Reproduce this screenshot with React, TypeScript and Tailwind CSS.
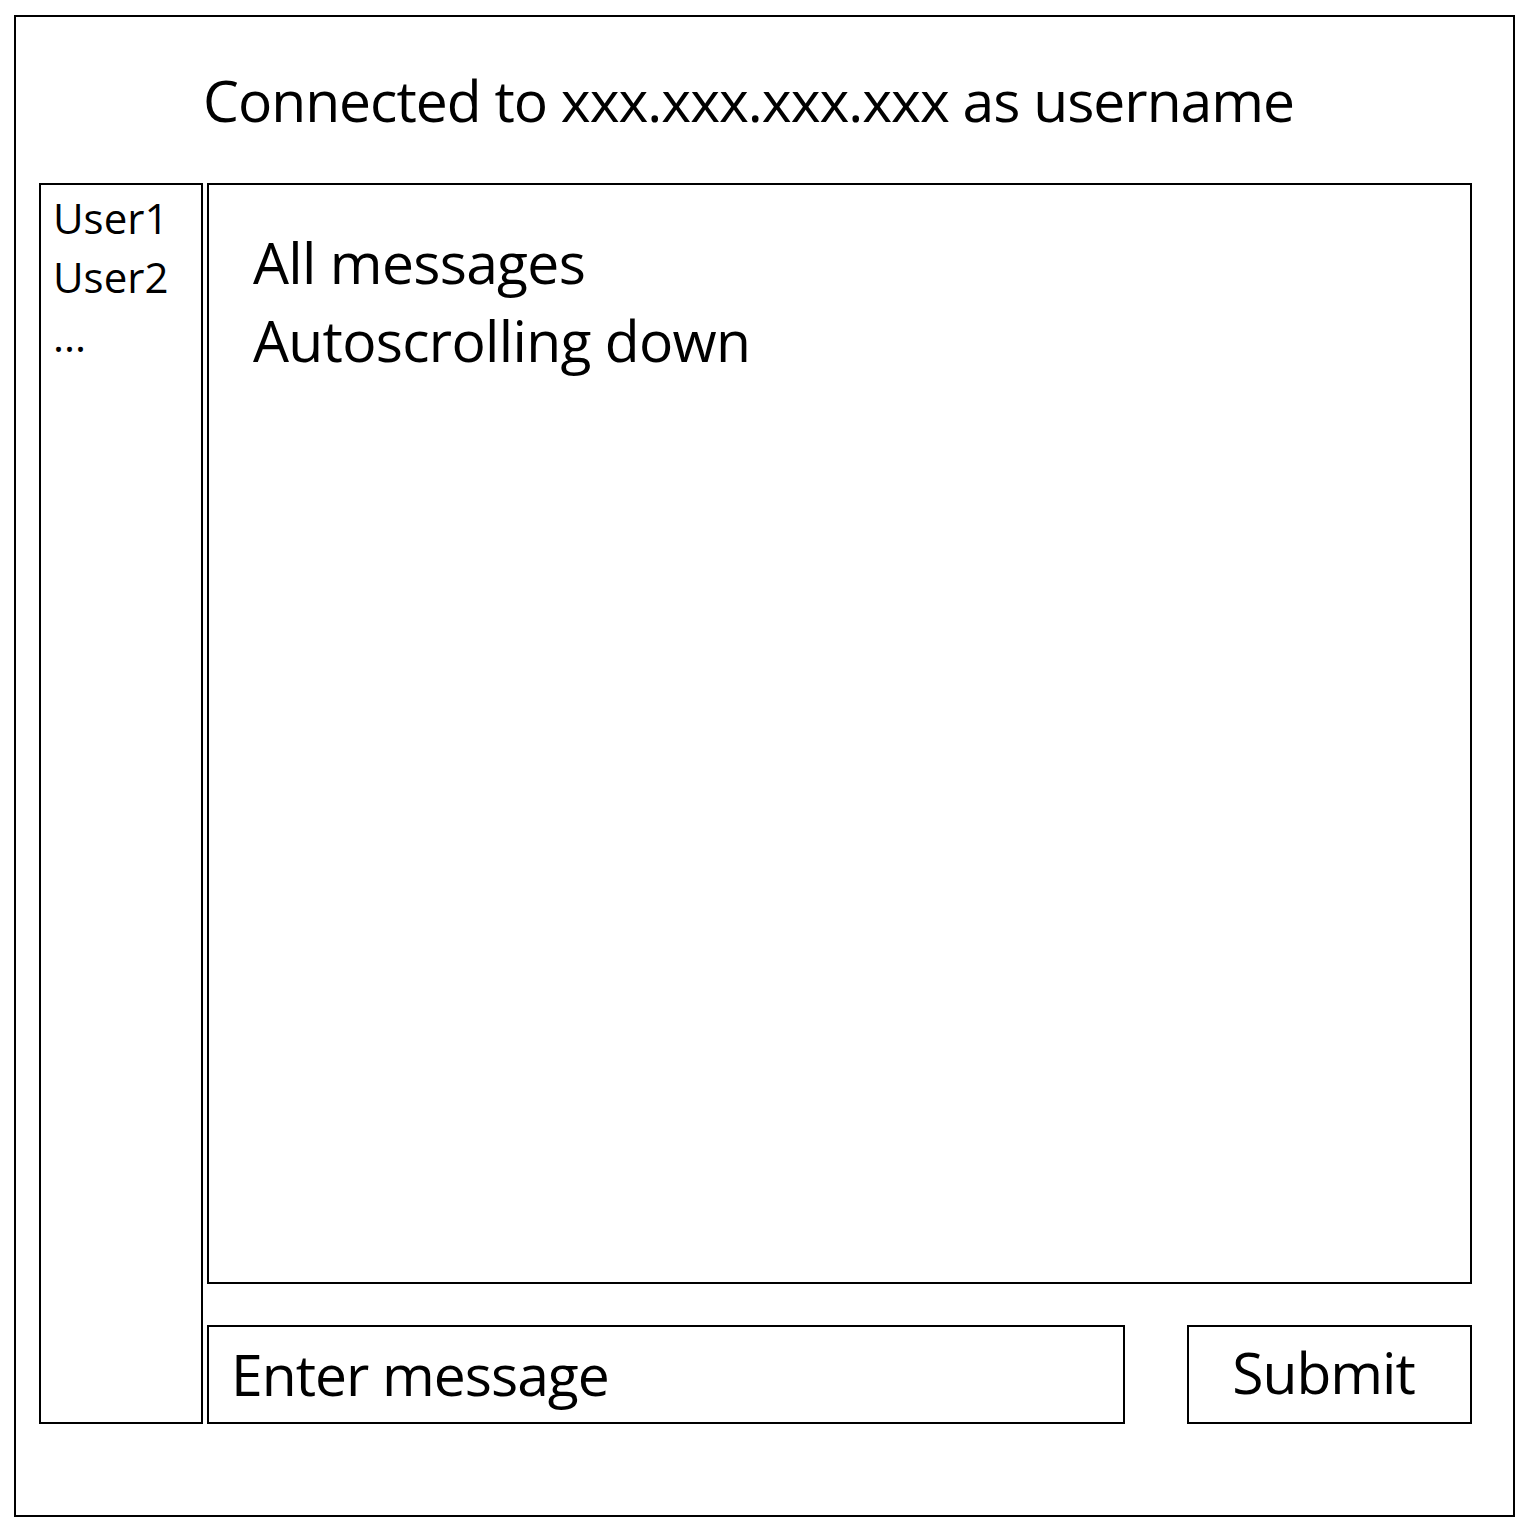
export default function App() {
  const users = ['User1', 'User2', '...'];

  return (
    <div className="w-[1527px] h-[1527px] bg-white text-black font-['Open_Sans',sans-serif] pt-[15px] pl-[14px]">
      <div className="w-[1501px] h-[1502px] border-2 border-black flex flex-col">
        {/* header */}
        <div className="h-[166px] pl-[187px] pt-[55px]">
          <div className="text-[57px] leading-none tracking-[-1px]">Connected to xxx.xxx.xxx.xxx as username</div>
        </div>

        <div className="flex gap-[4px] pl-[23px]">
          {/* user list */}
          <div className="w-[164px] h-[1241px] border-2 border-black pl-[12px] pt-[3px]">
            {users.map((u) => (
              <div key={u} className="text-[42px] leading-[59px]">
                {u}
              </div>
            ))}
          </div>

          {/* chat column */}
          <div className="w-[1265px] flex flex-col gap-[41px]">
            <div className="h-[1101px] border-2 border-black pl-[44px] pt-[38px] tracking-[-0.7px]">
              <div className="text-[57px] leading-[78px]">All messages</div>
              <div className="text-[57px] leading-[78px]">Autoscrolling down</div>
            </div>

            <div className="flex justify-between h-[99px]">
              <div className="w-[918px] border-2 border-black flex items-center pl-[22px]">
                <span className="text-[57px] leading-none tracking-[-1px]">Enter message</span>
              </div>
              <button className="w-[285px] border-2 border-black flex items-center justify-center pr-[12px] pb-[4px]">
                <span className="text-[57px] leading-none tracking-[-1px]">Submit</span>
              </button>
            </div>
          </div>
        </div>
      </div>
    </div>
  );
}
